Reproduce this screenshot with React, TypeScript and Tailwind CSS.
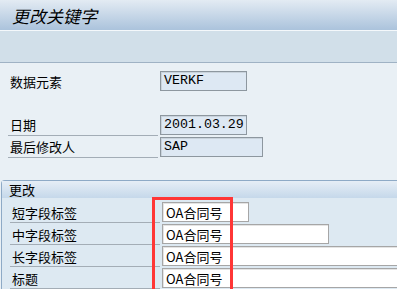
import React from "react";

const cjk = { fontFamily: '"Noto Sans CJK SC", "Noto Sans", sans-serif' };
const mono = { fontFamily: '"Liberation Mono", "DejaVu Sans Mono", monospace' };

function TopRow({ label, value, width, underline = true }: { label: string; value: string; width: number; underline?: boolean }) {
  return (
    <div className="flex h-[22px] items-stretch">
      <div
        className={`ml-[8px] flex w-[150px] shrink-0 items-center pl-[2px] text-[13px] leading-none text-black ${underline ? "border-b border-[#a3adb6]" : ""}`}
        style={cjk}
      >
        {label}
      </div>
      <div className="ml-[2px] flex shrink-0 items-center">
        {value !== "" && (
          <div
            className="flex h-[20px] items-center border border-[#8d979f] bg-[#dde8f3] pl-[3px] text-[13.3px] leading-none text-black shadow-[inset_1px_1px_0_#c9d3dc]"
            style={{ ...mono, width }}
          >
            {value}
          </div>
        )}
      </div>
    </div>
  );
}

function EditRow({ label, width }: { label: string; width: number }) {
  return (
    <div className="flex h-[22px] items-stretch">
      <div
        className="ml-[8px] flex w-[150px] shrink-0 items-center border-b border-[#a3adb6] pl-[2px] pt-[1px] text-[13px] leading-none text-black"
        style={cjk}
      >
        {label}
      </div>
      <div className="ml-[2px] flex shrink-0 items-center">
        <div
          className="flex h-[20px] items-center border border-[#a6a6a6] bg-white pl-[3px] text-[13px] leading-none text-black shadow-[inset_1px_1px_0_#e4e4e4]"
          style={{ ...cjk, width }}
        >
          OA合同号
        </div>
      </div>
    </div>
  );
}

export default function App() {
  return (
    <div className="relative h-[289px] w-[397px] overflow-hidden bg-[#e9f0f5]">
      <div className="flex h-[30px] items-center bg-gradient-to-b from-[#e3ebf3] to-[#abc3dc] pl-[12px]">
        <span className="text-[17px] italic leading-none text-black" style={cjk}>
          更改关键字
        </span>
      </div>
      <div className="h-[1px] bg-[#f4f8fb]" />
      <div className="h-[32px] border-b border-[#9fb2c4] bg-[#d1dfe9]" />
      <div className="pt-[7px]">
        <TopRow label="数据元素" value="VERKF" width={87} underline={false} />
        <div className="h-[22px]" />
        <TopRow label="日期" value="2001.03.29" width={87} />
        <TopRow label="最后修改人" value="SAP" width={103} />
      </div>
      <div className="ml-[1px] mt-[22px] rounded-tl-[4px] border-l border-t border-[#8eaac6] bg-[#dde9f2]">
        <div
          className="flex h-[17px] items-center bg-gradient-to-b from-[#e6eef6] to-[#c5d8ea] pl-[7px] text-[13px] leading-none text-black"
          style={cjk}
        >
          更改
        </div>
        <div className="pt-[3px]">
          <EditRow label="短字段标签" width={87} />
          <EditRow label="中字段标签" width={167} />
          <EditRow label="长字段标签" width={260} />
          <EditRow label="标题" width={260} />
        </div>
      </div>
      <div className="absolute left-[152px] top-[197px] h-[100px] w-[81px] border-[3px] border-[#ff3636]" />
    </div>
  );
}
